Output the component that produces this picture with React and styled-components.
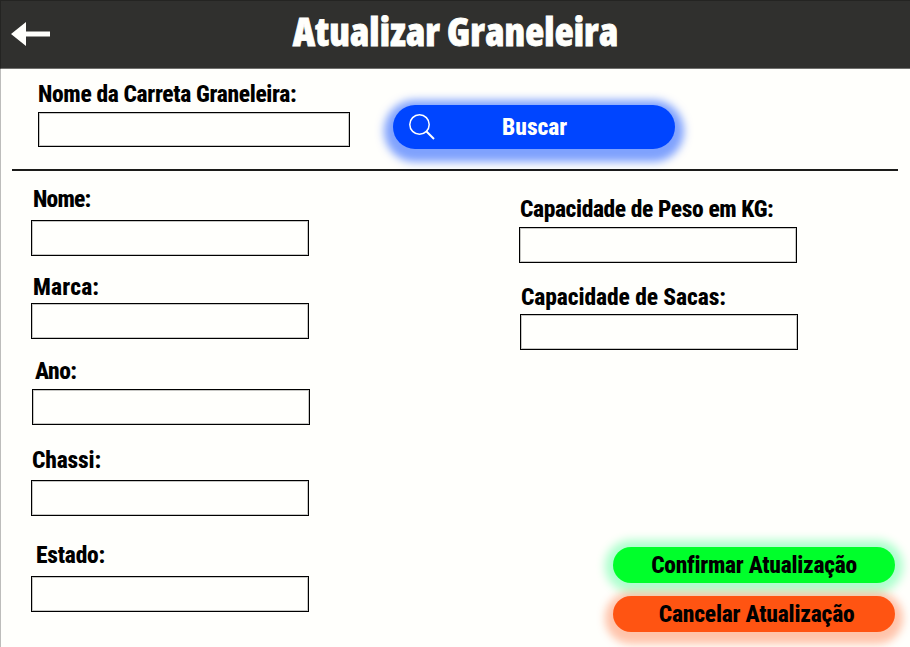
import React from 'react';
import styled, { createGlobalStyle } from 'styled-components';

const GlobalStyle = createGlobalStyle`
  *, *::before, *::after { box-sizing: border-box; }
  body { margin: 0; background: #fffffc; overflow: hidden; }
`;

const Page = styled.main`
  display: flex;
  flex-direction: column;
  width: 910px;
  height: 647px;
  overflow: hidden;
  background: #fffffc;
  font-family: Roboto, sans-serif;
  color: #000;
`;

const Header = styled.header`
  display: grid;
  grid-template-columns: 281px 1fr 281px;
  align-items: center;
  height: 69px;
  flex: none;
  background: #30302e;
  border-top: 1px solid #242422;
  border-left: 1px solid #242422;
  border-bottom: 1px solid #70706e;
`;

const BackButton = styled.button`
  justify-self: start;
  margin: 0 0 1px 10px;
  padding: 0;
  border: 0;
  background: none;
  height: 24px;
  line-height: 0;
`;

const Title = styled.h1`
  margin: 0;
  padding-bottom: 8px;
  color: #fffffc;
  font: 800 39px/54px 'Open Sans', sans-serif;
  font-stretch: 75%;
  letter-spacing: 0.15px;
  text-align: center;
  white-space: nowrap;
  -webkit-text-stroke: 0.8px #fffffc;
`;

const Body = styled.div`
  flex: 1;
  display: flex;
  flex-direction: column;
  border-left: 1px solid #bdbdbb;
`;

const SearchBar = styled.section`
  display: flex;
  height: 102px;
  margin: 0 12px 0 11px;
  border-bottom: 2px solid #1c1c1a;
`;

const SearchField = styled.div`
  width: 312px;
  margin-left: 26px;
  padding-top: 11px;
`;

const Text = styled.label`
  display: block;
  font-size: 23.5px;
  font-weight: 800;
  font-stretch: 75%;
  line-height: 28px;
  letter-spacing: ${p => p.$tracking || 0}px;
  white-space: nowrap;
`;

const Input = styled.input`
  display: block;
  width: ${p => p.$width || 278}px;
  height: ${p => p.$height || 36}px;
  margin: 0;
  padding: 0 8px;
  border: 1px solid #000;
  border-radius: 0;
  outline: 0;
  background: transparent;
  box-shadow: inset 0 0 0 1px rgba(0, 0, 0, 0.22);
  font: 20px Roboto, sans-serif;
`;

const Pill = styled.button`
  display: flex;
  align-items: center;
  justify-content: center;
  width: 282px;
  height: ${p => p.$height}px;
  padding: 0;
  border: 0;
  border-radius: 24px;
  background: ${p => p.$color};
  box-shadow: ${p => p.$glow};
  color: ${p => p.$ink || '#000'};
  font-family: inherit;
`;

const SearchButton = styled(Pill)`
  display: grid;
  grid-template-columns: 109px 1fr;
  justify-items: start;
  margin: 36px 0 0 43px;
`;

const SearchIcon = styled.svg`
  margin: 0 0 1px 16px;
`;

const Columns = styled.div`
  flex: 1;
  display: flex;
  justify-content: space-between;
  padding-left: 30px;
`;

const Column = styled.div`
  display: flex;
  flex-direction: column;
`;

const RightColumn = styled(Column)`
  width: 391px;
`;

const Field = styled.div`
  margin-top: ${p => p.$before}px;
  padding-left: ${p => p.$indent || 0}px;
`;

const FieldLabel = styled(Text)`
  margin: 0 0 ${p => p.$after}px ${p => p.$left}px;
`;

const Actions = styled.div`
  display: flex;
  flex-direction: column;
  gap: 13px;
  margin: auto 0 15px 94px;
`;

const leftFields = [
  { id: 'nome', label: 'Nome:', before: 14, after: 7, left: 2, tracking: -0.8 },
  { id: 'marca', label: 'Marca:', before: 17, after: 2, left: 2, tracking: 0.2 },
  { id: 'ano', label: 'Ano:', before: 18, after: 4, left: 3, indent: 1, tracking: -0.5 },
  { id: 'chassi', label: 'Chassi:', before: 21, after: 6, left: 1, tracking: -0.15 },
  { id: 'estado', label: 'Estado:', before: 25, after: 7, left: 5, tracking: -0.2 },
];

const rightFields = [
  { id: 'peso', label: 'Capacidade de Peso em KG:', before: 24, after: 4, left: 1, tracking: -0.38 },
  { id: 'sacas', label: 'Capacidade de Sacas:', before: 20, after: 3, left: 1, indent: 1, tracking: -0.07 },
];

const renderField = f => (
  <Field key={f.id} $before={f.before} $indent={f.indent}>
    <FieldLabel htmlFor={f.id} $after={f.after} $left={f.left} $tracking={f.tracking}>{f.label}</FieldLabel>
    <Input id={f.id} />
  </Field>
);

export default function App() {
  return (
    <Page>
      <GlobalStyle />
      <Header>
        <BackButton aria-label="Voltar">
          <svg width="39" height="24" viewBox="0 0 39 24">
            <path d="M0 12 15 0v9.5h24v5H15V24z" fill="#fffffc" />
          </svg>
        </BackButton>
        <Title>Atualizar Graneleira</Title>
      </Header>
      <Body>
        <SearchBar>
          <SearchField>
            <FieldLabel htmlFor="busca" $after={4} $left={0} $tracking={-0.33}>Nome da Carreta Graneleira:</FieldLabel>
            <Input id="busca" $width={312} $height={35} />
          </SearchField>
          <SearchButton $height={44} $color="#0045ff" $ink="#fffffc" $glow="0 4px 8px 9px rgba(0, 69, 255, 0.5)">
            <SearchIcon width="26" height="26" viewBox="0 0 26 26" fill="none" stroke="#fff" strokeWidth="1.5">
              <circle cx="10.5" cy="10.5" r="9.7" />
              <path d="m17.5 17.5 7.5 7.5" strokeWidth="2" />
            </SearchIcon>
            <Text as="span">Buscar</Text>
          </SearchButton>
        </SearchBar>
        <Columns>
          <Column>{leftFields.map(renderField)}</Column>
          <RightColumn>
            {rightFields.map(renderField)}
            <Actions>
              <Pill $height={36} $color="#00ff2b" $glow="0 1px 10px 8px rgba(0, 255, 110, 0.33)">
                <Text as="span" $tracking={-0.27}>Confirmar Atualização</Text>
              </Pill>
              <Pill $height={36} $color="#ff5412" $glow="0 4px 9px 8px rgba(255, 84, 18, 0.35)">
                <Text as="span" $tracking={-0.2}>&nbsp;Cancelar Atualização</Text>
              </Pill>
            </Actions>
          </RightColumn>
        </Columns>
      </Body>
    </Page>
  );
}
